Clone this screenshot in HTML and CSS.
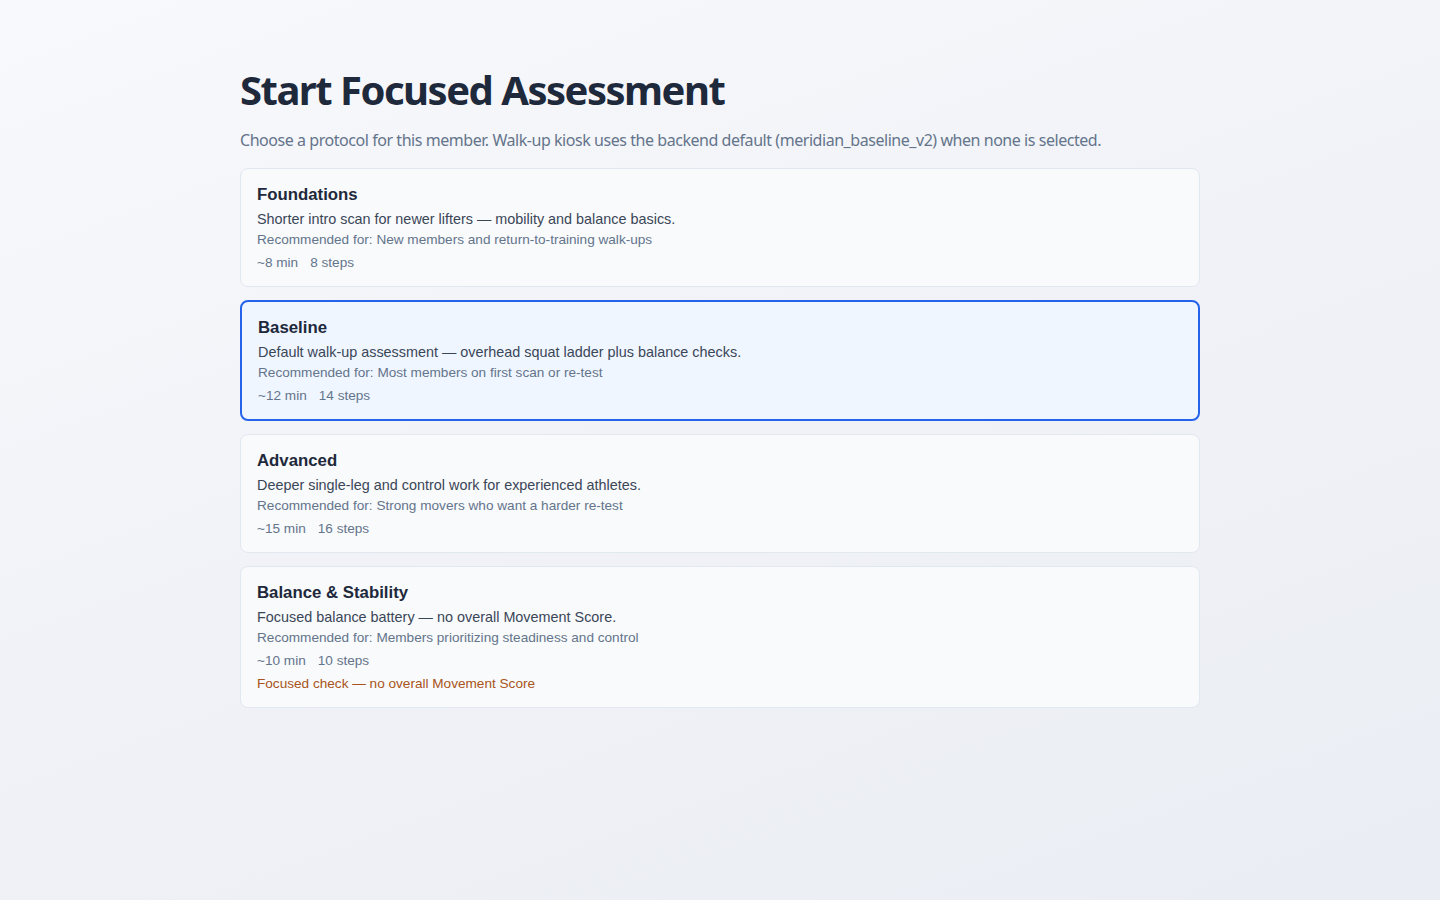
FILE: index.html
```html
<!DOCTYPE html>
<html lang="en">
<head>
<meta charset="utf-8" />
<title>Start Focused Assessment</title>
<link rel="stylesheet" href="styles.css">
</head>
<body>
<div class="page">
    <h1 class="title">Start Focused Assessment</h1>
    <p class="lead">Choose a protocol for this member. Walk-up kiosk uses the backend default (meridian_baseline_v2) when none is selected.</p>

    <div class="protocols">
        <button class="protocol" type="button">
            <span class="name">Foundations</span>
            <span class="desc">Shorter intro scan for newer lifters — mobility and balance basics.</span>
            <span class="rec">Recommended for: New members and return-to-training walk-ups</span>
            <span class="meta"><span>~8 min</span><span>8 steps</span></span>
        </button>
        <button class="protocol selected" type="button">
            <span class="name">Baseline</span>
            <span class="desc">Default walk-up assessment — overhead squat ladder plus balance checks.</span>
            <span class="rec">Recommended for: Most members on first scan or re-test</span>
            <span class="meta"><span>~12 min</span><span>14 steps</span></span>
        </button>
        <button class="protocol" type="button">
            <span class="name">Advanced</span>
            <span class="desc">Deeper single-leg and control work for experienced athletes.</span>
            <span class="rec">Recommended for: Strong movers who want a harder re-test</span>
            <span class="meta"><span>~15 min</span><span>16 steps</span></span>
        </button>
        <button class="protocol" type="button">
            <span class="name">Balance &amp; Stability</span>
            <span class="desc">Focused balance battery — no overall Movement Score.</span>
            <span class="rec">Recommended for: Members prioritizing steadiness and control</span>
            <span class="meta"><span>~10 min</span><span>10 steps</span></span>
            <span class="warn">Focused check — no overall Movement Score</span>
        </button>
    </div>
</div>
</body>
</html>
```

FILE: styles.css
```css
html { min-height: 100%; }
body { margin: 0; min-height: 100vh; background: linear-gradient(160deg, #f8f9fc 0%, #f0f2f7 50%, #eaedf3 100%); font-family: "Noto Sans", "Open Sans", sans-serif; color: #1e293b; }

.page { width: 960px; margin: 0 auto; padding: 66px 0 40px; }

.title { margin: 0; font-size: 40px; line-height: 1.2; font-weight: 700; letter-spacing: -1.5px; color: #1e293b; }
.lead { margin: 14px 0 16px; font-size: 16px; line-height: 24px; letter-spacing: -0.45px; color: #64748b; }

.protocols { display: flex; flex-direction: column; gap: 13px; }

.protocol { display: flex; flex-direction: column; align-items: flex-start; text-align: left; width: 100%; margin: 0; padding: 16px; border: 1px solid #e2e8f0; border-radius: 8px; background: #f8fafc; font-family: "Liberation Sans", Arial, sans-serif; color: #334155; cursor: pointer; }
.protocol.selected { border: 2px solid #2563eb; background: #eff6ff; }

.name { font-size: 16.8px; font-weight: 700; color: #1e293b; }
.desc { margin-top: 6px; font-size: 14.4px; color: #3b4657; }
.rec { margin-top: 5px; font-size: 13.6px; color: #64748b; }
.meta { display: flex; gap: 12px; margin-top: 8px; font-size: 13.6px; color: #64748b; }
.warn { margin-top: 8px; font-size: 13.6px; color: #a85420; }
```
